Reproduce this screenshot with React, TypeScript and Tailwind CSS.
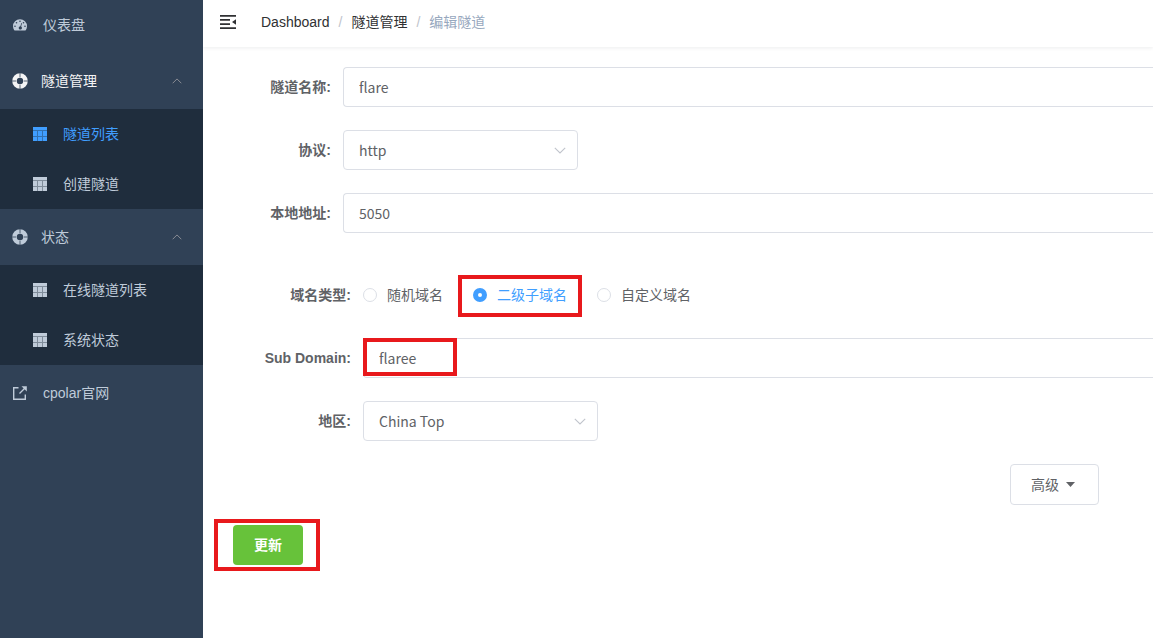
import React, { useState } from 'react';
import clsx from 'clsx';

interface IconProps {
  className?: string;
}

const DashboardIcon: React.FC<IconProps> = ({ className }) => (
  <svg viewBox="0 0 14 14" className={className} fill="currentColor" aria-hidden="true">
    <path
      fillRule="evenodd"
      d="M7 1.3a7 7 0 0 0-7 7c0 1.4.4 2.7 1.1 3.8.1.2.3.3.6.3h10.6c.3 0 .5-.1.6-.3A7 7 0 0 0 14 8.300a7 7 0 0 0-7-7zM7 2.500a.8.8 0 1 1 0 1.600.8.8 0 0 1 0-1.600zM3.500 4a.8.8 0 1 1 0 1.600.8.8 0 0 1 0-1.600zM2 7.500a.8.8 0 1 1 0 1.600.8.8 0 0 1 0-1.600zM12 7.500a.8.8 0 1 1 0 1.600.8.8 0 0 1 0-1.600zM10.500 4a.8.8 0 1 1 0 1.600.8.8 0 0 1 0-1.600zM8.300 5l.7.200-.9 3.300a1.600 1.600 0 1 1-.7-.2z"
    />
  </svg>
);

const HelpIcon: React.FC<IconProps> = ({ className }) => (
  <svg viewBox="0 0 16 16" className={className} fill="none" stroke="currentColor" aria-hidden="true">
    <circle cx="8" cy="8" r="5.500" strokeWidth="4.600" />
    <path d="M8 0v4.200M8 11.800V16M0 8h4.200M11.800 8H16" stroke="#304156" strokeWidth=".8" />
  </svg>
);

const TableIcon: React.FC<IconProps> = ({ className }) => (
  <svg viewBox="0 0 14 14" className={className} fill="currentColor" aria-hidden="true">
    <path d="M0 0h14v3H0zM0 4h4v5H0zM5 4h4v5H5zM10 4h4v5h-4zM0 10h4v4H0zM5 10h4v4H5zM10 10h4v4h-4z" />
    <path opacity=".6" d="M0 3h14v1H0zM0 9h14v1H0zM4 4h1v10H4zM9 4h1v10H9z" />
  </svg>
);

const LinkIcon: React.FC<IconProps> = ({ className }) => (
  <svg viewBox="0 0 14 14" className={className} fill="none" stroke="currentColor" strokeWidth="1.400" aria-hidden="true">
    <path d="M5.500 1.700H.7v11.600h11.600V8.500M6.500 7.500l5.500-5.500" />
    <path d="M8.500.2h5.300v5.300z" fill="currentColor" stroke="none" />
  </svg>
);

const FoldIcon: React.FC<IconProps> = ({ className }) => (
  <svg viewBox="0 0 16 14" className={className} fill="currentColor" aria-hidden="true">
    <path d="M0 0h16v1.700H0zM0 4.100h10v1.700H0zM0 8.200h10v1.700H0zM0 12.300h16V14H0zM16 4.300v5.400L12 7z" />
  </svg>
);

const Arrow: React.FC<IconProps> = ({ className }) => (
  <svg viewBox="0 0 12 7" className={className} fill="none" stroke="currentColor" strokeWidth="1.100" aria-hidden="true">
    <path d="M.8.8 6 6 11.200.8" />
  </svg>
);

/* --- SIDEBAR --- */

interface GroupProps {
  title: string;
  items: string[];
  opened?: boolean;
  current?: string;
}

const MenuGroup: React.FC<GroupProps> = ({ title, items, opened, current }) => (
  <li>
    <button
      type="button"
      className={clsx('flex h-14 w-full items-center gap-[13px] pl-3 pr-[21px]', opened ? 'text-[#f4f4f5]' : 'text-[#bfcbd9]')}
    >
      <HelpIcon className="size-4" />
      <span className="flex-1 text-left">{title}</span>
      <Arrow className="h-[6px] w-[10px] rotate-180 text-[#909399]" />
    </button>
    <ul className="bg-[#1f2d3d]">
      {items.map((item) => (
        <li key={item}>
          <a
            href="#"
            className={clsx('flex h-[50px] items-center gap-4 pl-[33px]', item === current ? 'text-[#409eff]' : 'text-[#bfcbd9]')}
          >
            <TableIcon className="size-[14px]" />
            {item}
          </a>
        </li>
      ))}
    </ul>
  </li>
);

const Sidebar = () => (
  <nav className="w-[203px] shrink-0 bg-[#304156] text-[#bfcbd9]">
    <ul>
      <li>
        <a href="#" className="flex h-[53px] items-center gap-4 pb-[3px] pl-[13px]">
          <DashboardIcon className="size-[14px]" />
          仪表盘
        </a>
      </li>
      <MenuGroup title="隧道管理" items={['隧道列表', '创建隧道']} opened current="隧道列表" />
      <MenuGroup title="状态" items={['在线隧道列表', '系统状态']} />
      <li>
        <a href="#" className="flex h-14 items-center gap-4 pl-[13px]">
          <LinkIcon className="size-[14px]" />
          cpolar官网
        </a>
      </li>
    </ul>
  </nav>
);

/* --- FORM --- */

interface FieldProps {
  id: string;
  label: string;
  wide?: boolean;
  children: React.ReactNode;
}

const Field: React.FC<FieldProps> = ({ id, label, wide, children }) => (
  <div className="flex items-center gap-3">
    <label htmlFor={id} className={clsx('shrink-0 text-right font-bold', wide ? 'w-[148px]' : 'w-32')}>
      {label}:
    </label>
    {children}
  </div>
);

const inputFont = "font-['Noto_Sans_CJK_SC',sans-serif] text-[14px]";

const TextInput: React.FC<{ id: string; value: string }> = ({ id, value }) => (
  <input
    id={id}
    type="text"
    defaultValue={value}
    className={clsx(inputFont, 'h-10 w-full min-w-0 rounded-l border border-r-0 border-[#dcdfe6] bg-white px-[15px] outline-none')}
  />
);

const Select: React.FC<{ id: string; options: string[] }> = ({ id, options }) => (
  <div className="relative w-[235px]">
    <select
      id={id}
      className={clsx(inputFont, 'h-10 w-full appearance-none rounded border border-[#dcdfe6] bg-white px-[15px] outline-none')}
    >
      {options.map((option) => (
        <option key={option}>{option}</option>
      ))}
    </select>
    <Arrow className="pointer-events-none absolute right-3 top-[17px] h-[7px] w-3 text-[#c0c4cc]" />
  </div>
);

// Red frame drawn over the steps the reader has to follow
const Mark: React.FC<IconProps> = ({ className }) => (
  <span className={clsx('pointer-events-none absolute border-4 border-[#e8191c]', className)} />
);

const domainTypes = ['随机域名', '二级子域名', '自定义域名'];

const TunnelForm = () => {
  const [domainType, setDomainType] = useState('二级子域名');

  return (
    <form className="pt-5 text-[#606266]">
      <div className="flex flex-col gap-[23px]">
        <Field id="name" label="隧道名称">
          <TextInput id="name" value="flare" />
        </Field>
        <Field id="protocol" label="协议">
          <Select id="protocol" options={['http', 'https', 'tcp']} />
        </Field>
        <Field id="address" label="本地地址">
          <TextInput id="address" value="5050" />
        </Field>
      </div>

      <div className="mt-[42px] flex flex-col gap-[23px]">
        <div role="radiogroup" aria-labelledby="domain-type" className="flex h-10 items-center gap-3">
          <span id="domain-type" className="w-[148px] shrink-0 text-right font-bold">
            域名类型:
          </span>
          <div className="flex items-center gap-[30px]">
            {domainTypes.map((type) => (
              <label
                key={type}
                className={clsx('relative flex items-center gap-[10px]', type === domainType && 'text-[#409eff]')}
              >
                <input
                  type="radio"
                  name="domain-type"
                  checked={type === domainType}
                  onChange={() => setDomainType(type)}
                  className="size-[14px] appearance-none rounded-full border border-[#dcdfe6] bg-white checked:border-[5px] checked:border-[#409eff]"
                />
                {type}
                {type === '二级子域名' && <Mark className="-inset-x-[15px] -bottom-3 -top-[10px]" />}
              </label>
            ))}
          </div>
        </div>
        <Field id="subdomain" label="Sub Domain" wide>
          <div className="relative flex-1">
            <TextInput id="subdomain" value="flaree" />
            <Mark className="left-0 top-0 h-[38px] w-[94px]" />
          </div>
        </Field>
        <Field id="region" label="地区" wide>
          <Select id="region" options={['China Top', 'China VIP']} />
        </Field>
        <div className="flex justify-end pr-[54px]">
          <button
            type="button"
            className="flex h-[41px] items-center gap-[7px] rounded border border-[#dcdfe6] bg-white pl-5 pr-[23px]"
          >
            高级
            <svg viewBox="0 0 9 5" className="h-[5px] w-[9px]" fill="currentColor" aria-hidden="true">
              <path d="M0 0h9L4.500 5z" />
            </svg>
          </button>
        </div>
      </div>

      <div className="relative ml-[30px] mt-5 w-fit">
        <button type="submit" className="h-10 rounded bg-[#67c23a] px-[21px] font-bold text-white">
          更新
        </button>
        <Mark className="-left-[19px] -right-[17px] -inset-y-[6px]" />
      </div>
    </form>
  );
};

export default function App() {
  return (
    <div className="flex min-h-screen bg-white font-['Liberation_Sans','Noto_Sans_CJK_SC',sans-serif] text-[14px] leading-5">
      <Sidebar />
      <main className="min-w-0 flex-1 overflow-hidden">
        <header className="flex h-[47px] items-center pb-1 pl-[17px] shadow-[0_1px_4px_rgba(0,21,41,0.08)]">
          <button type="button" aria-label="Toggle sidebar" className="mr-[25px] text-[#303133]">
            <FoldIcon className="h-[14px] w-4" />
          </button>
          <nav className="flex items-center gap-[9px] text-[#303133]">
            <a href="#">Dashboard</a>
            <span className="text-[#c0c4cc]">/</span>
            <a href="#">隧道管理</a>
            <span className="text-[#c0c4cc]">/</span>
            <span className="text-[#97a8be]">编辑隧道</span>
          </nav>
        </header>
        <TunnelForm />
      </main>
    </div>
  );
}
